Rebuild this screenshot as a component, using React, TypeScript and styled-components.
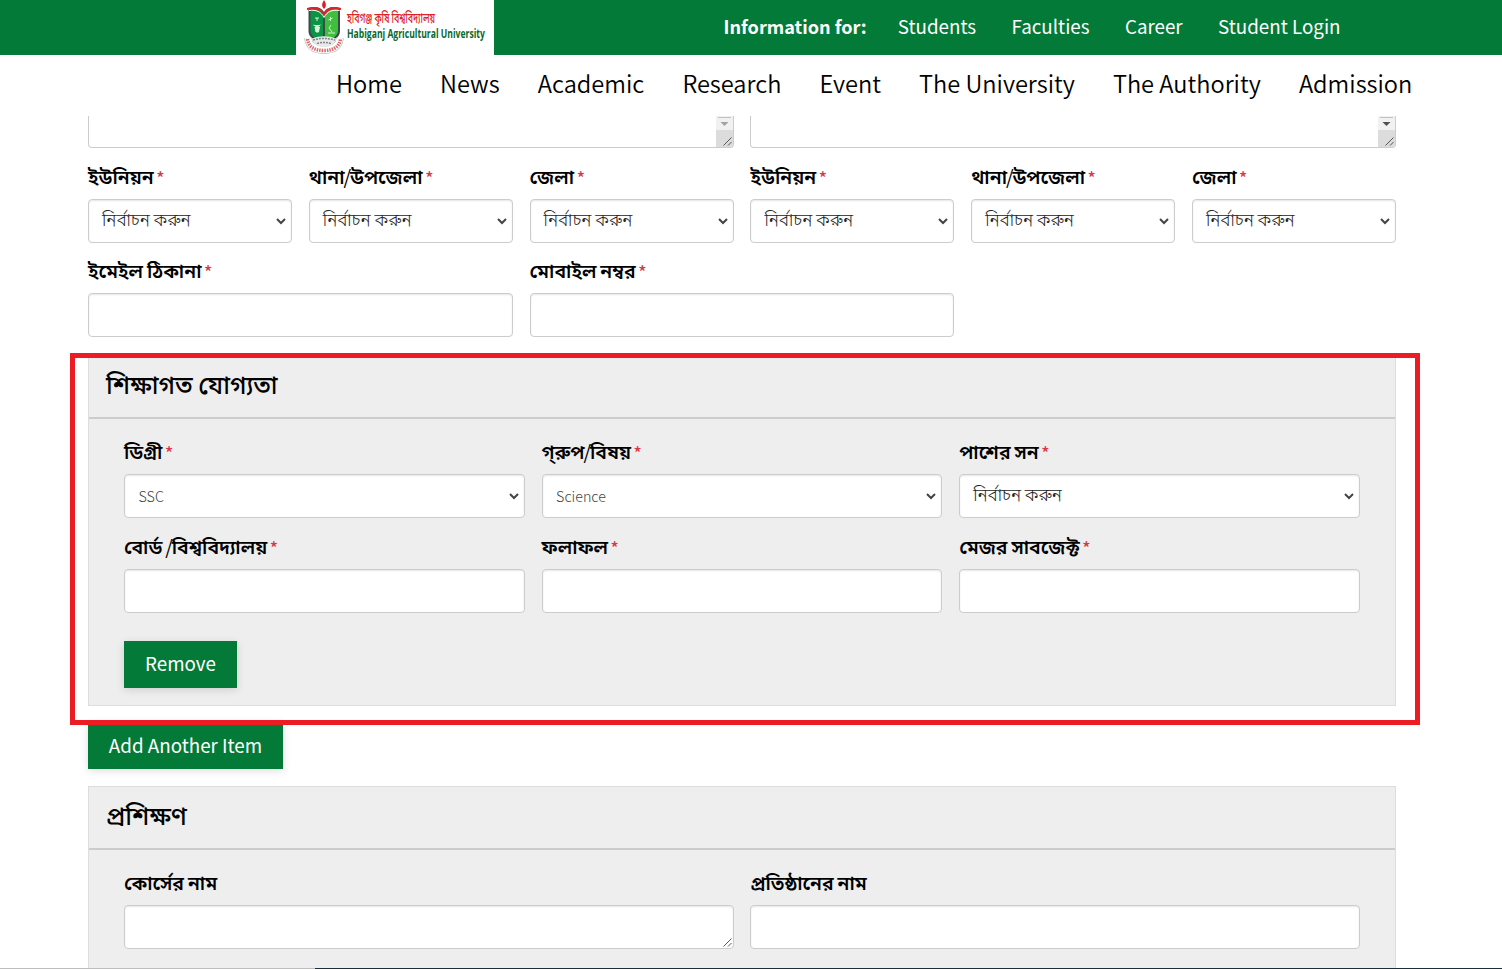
import React from "react";
import styled, { createGlobalStyle } from "styled-components";

const GREEN = "#047a38";

const GlobalStyle = createGlobalStyle`
  * { box-sizing: border-box; }
  html, body { margin: 0; padding: 0; }
  body {
    background: #fff;
    color: #000;
    font-family: "Noto Sans CJK JP", "Noto Sans Bengali", "Noto Sans", sans-serif;
    overflow: hidden;
  }
`;

const Page = styled.div`
  position: relative;
  width: 1502px;
  height: 969px;
  overflow: hidden;
  display: flex;
  flex-direction: column;
`;

const TopBar = styled.header`
  flex: none;
  height: 55px;
  background: ${GREEN};
  display: flex;
  padding-left: 296px;
`;

const LogoBox = styled.a`
  width: 198px;
  height: 55px;
  background: #fff;
  display: block;

  svg {
    display: block;
    overflow: visible;
  }
`;

const TopLinks = styled.nav`
  display: flex;
  margin-left: 229.5px;
  align-items: flex-start;
  color: #fff;
`;

const TopTitle = styled.span`
  font-size: 18.1px;
  font-weight: 700;
  line-height: 24px;
  width: 174.3px;
  margin-top: 14px;
  white-space: nowrap;
`;

const TopLink = styled.a`
  font-size: 18.8px;
  line-height: 24px;
  margin: 14px 35.4px 0 0;
  white-space: nowrap;
`;

const MainNav = styled.nav`
  flex: none;
  height: 61px;
  display: flex;
  gap: 38.1px;
  padding: 13px 0 0 336px;
`;

const NavLink = styled.a`
  font-size: 23.6px;
  line-height: 30px;
  font-weight: 350;
  white-space: nowrap;
`;

const Content = styled.main`
  flex: none;
  width: 1308px;
  margin-left: 88px;
  display: flex;
  flex-direction: column;
`;

const Row = styled.div<{ $cols: number }>`
  display: grid;
  grid-template-columns: repeat(${(p) => p.$cols}, 1fr);
  column-gap: 16.8px;
`;

const FieldBox = styled.div<{ $lead: number }>`
  display: flex;
  flex-direction: column;
  padding-top: ${(p) => p.$lead}px;
`;

const Label = styled.label`
  height: 37px;
  line-height: 28px;
  font-size: 19.4px;
  font-weight: 600;
  word-spacing: -0.5px;
  white-space: nowrap;
`;

const Slash = styled.span`
  font-weight: 400;
  margin: 0 -1.2px 0 -1px;
`;

const Star = styled.span`
  color: #dc3545;
  font-size: 17px;
  font-weight: 500;
  line-height: 1;
  vertical-align: -1px;
  margin-left: 2.5px;
`;

const Control = styled.div`
  height: 44px;
  border: 1px solid #ccc;
  border-radius: 4px;
  background: #fff;
  box-shadow: inset 0 1px 2px rgba(0, 0, 0, 0.1);
  color: #444;
  display: flex;
  justify-content: space-between;
  align-items: flex-start;
  padding: 0 5px 0 13px;
  position: relative;
`;

const Value = styled.span<{ $latin?: boolean }>`
  font-size: ${(p) => (p.$latin ? 14.3 : 17.3)}px;
  font-weight: 300;
  line-height: 24px;
  padding-top: ${(p) => (p.$latin ? 9 : 7)}px;
  padding-left: ${(p) => (p.$latin ? 0.5 : 0)}px;
  color: ${(p) => (p.$latin ? "#444" : "#222")};
  white-space: nowrap;
`;

const Chevron = styled.svg`
  margin-top: 17px;
  width: 10px;
  height: 8px;
`;

const Grip = styled.svg`
  position: absolute;
  right: 0;
  bottom: 0;
  width: 11px;
  height: 11px;
`;

const TextTail = styled.div`
  height: 32px;
  border: 1px solid #ccc;
  border-top: 0;
  border-radius: 0 0 4px 4px;
  overflow: hidden;
  display: flex;
  justify-content: flex-end;
`;

const ScrollTrack = styled.svg`
  width: 17px;
  height: 31px;
  flex: none;
`;

const Section = styled.section<{ $top: number }>`
  margin-top: ${(p) => p.$top}px;
  border: 1px solid #ddd;
  background: #eee;
`;

const SectionTitle = styled.h2`
  margin: 0;
  height: 63px;
  border-bottom: 2px solid #ccc;
  padding: 9.5px 0 0 17px;
  font-size: 25px;
  line-height: 34px;
  font-weight: 500;
`;

const SectionBody = styled.div<{ $bottom: number }>`
  padding: 0 35px ${(p) => p.$bottom}px;
`;

const Button = styled.button<{ $w: number; $top: number; $drop?: number }>`
  display: block;
  width: ${(p) => p.$w}px;
  height: 47px;
  margin-top: ${(p) => p.$top}px;
  padding: 0 0 ${(p) => 3 - (p.$drop ?? 0)}px;
  border: 0;
  background: ${GREEN};
  color: #fff;
  font-family: inherit;
  font-size: 18.8px;
  line-height: 44px;
  white-space: nowrap;
  box-shadow: 0 2px 8px rgba(0, 0, 0, 0.13);
`;

const Highlight = styled.div`
  position: absolute;
  left: 70px;
  top: 353px;
  width: 1350px;
  height: 372px;
  border: 5px solid #ed1c24;
`;

const BottomEdge = styled.div`
  position: absolute;
  left: 0;
  bottom: 0;
  width: 100%;
  height: 1px;
  background: linear-gradient(to right, #bdbdbd 315px, #16303c 315px);
`;

function Logo() {
  return (
    <svg width="198" height="55" viewBox="0 0 198 55">
      <path d="M12.500 8c7-2 12.500-1 15.500 4c3-5 9-6 16-4v23c0 7-7 10-16 12c-9-2-15.500-5-15.500-12z" fill="#3d4a4a" />
      <path d="M14.500 9.500c7-1 11 1 12.500 5.500v25c-8-1-12.500-4-12.500-10z" fill="#0b9444" />
      <path d="M42 9.500c-7-1-11.500 1-13 5.500v25c8-1 13-4 13-10z" fill="#3fbf3c" />
      <path d="M11 8c7-2 14-1 17 5c3-6 10-7 17-5v2c-8-2-13 0-17 6c-4-6-9-8-17-6z" fill="#d9252c" />
      <path d="M13 10.500c7-1 12 1 15 7c3-6 8-8 15.500-7" fill="none" stroke="#fff" strokeWidth="1" />
      <path d="M28 0c-2.500 4-2.500 6 0 9c2.500-3 2.500-5 0-9z" fill="#e01b22" />
      <path d="M17.500 25q3.500 3 7 0M19 27h4.500l-1 5h-2.500z M21 18v3M19 18h4" fill="#d8f3dc" stroke="#d8f3dc" strokeWidth="1" />
      <path d="M32.500 20l4-2M34.500 17v4M35 25l-2 3l3 4M32 33h7" fill="none" stroke="#d8f3dc" strokeWidth="1" />
      <path d="M12 38c1 8 6 12 16 12s15-4 16-12" fill="none" stroke="#a5a9ac" strokeWidth="7.500" />
      <path d="M12 38c1 8 6 12 16 12s15-4 16-12" fill="none" stroke="#fff" strokeWidth="6.500" />
      <path d="M11.500 39c1 8 7 11.500 16.500 11.500s15.500-3.500 16.500-11.500" fill="none" stroke="#dd6a6e" strokeWidth="3.500" strokeDasharray="1.500 1" />
      <path d="M16 38.500c8-3 16-3 24 0c-1 6-6 8.500-12 8.500s-11-2.500-12-8.500z" fill="#e8eaea" />
      <path d="M17 40q11-3 22 0M21 43.500q7-2 14 0" fill="none" stroke="#7d848a" strokeWidth="1.500" strokeDasharray="2 1" />
      <text x="51" y="22.500" fontSize="14.500" fontWeight="500" fill="#dd1f26" textLength="88" lengthAdjust="spacingAndGlyphs">হবিগঞ্জ কৃষি বিশ্ববিদ্যালয়</text>
      <text x="51" y="38" fontSize="12" fontFamily="Open Sans" fontWeight="700" fill="#0a6a2e" textLength="138" lengthAdjust="spacingAndGlyphs">Habiganj Agricultural University</text>
    </svg>
  );
}

function ResizeGrip() {
  return (
    <Grip viewBox="0 0 11 11">
      <path d="M1.500 9.500l8-8M6 9.500l3.500-3.500" stroke="#555" strokeWidth="1" fill="none" />
    </Grip>
  );
}

type FieldProps = { label: string; value?: string; latin?: boolean; required?: boolean; lead?: number; grip?: boolean };

function Field({ label, value, latin, required = true, lead = 14, grip }: FieldProps) {
  const [head, tail] = label.split("/");
  return (
    <FieldBox $lead={lead}>
      <Label>
        {head}
        {tail && <Slash>/</Slash>}
        {tail}
        {required && <Star>*</Star>}
      </Label>
      <Control>
        {value && <Value $latin={latin}>{value}</Value>}
        {value && (
          <Chevron viewBox="0 0 10 8">
            <path d="M1 2l4 4l4-4" fill="none" stroke="#444" strokeWidth="2" />
          </Chevron>
        )}
        {grip && <ResizeGrip />}
      </Control>
    </FieldBox>
  );
}

function ScrolledTextarea({ arrow }: { arrow: string }) {
  return (
    <TextTail>
      <ScrollTrack viewBox="0 0 17 31">
        <rect width="17" height="14" fill="#f1f1f1" />
        <rect x="2" y="1" width="13" height="1" fill="#c1c1c1" />
        <path d="M4.500 6h8l-4 4z" fill={arrow} />
        <rect y="14" width="17" height="17" fill="#dcdcdc" />
        <path d="M7.500 29.500l8-8M12 29.500l3.500-3.500" stroke="#555" fill="none" />
      </ScrollTrack>
    </TextTail>
  );
}

const CHOOSE = "নির্বাচন করুন";
const AREAS = ["ইউনিয়ন", "থানা/উপজেলা", "জেলা", "ইউনিয়ন", "থানা/উপজেলা", "জেলা"];
const MENU = ["Home", "News", "Academic", "Research", "Event", "The University", "The Authority", "Admission"];

export default function App() {
  return (
    <Page>
      <GlobalStyle />
      <TopBar>
        <LogoBox>
          <Logo />
        </LogoBox>
        <TopLinks>
          <TopTitle>Information for:</TopTitle>
          {["Students", "Faculties", "Career", "Student Login"].map((t) => (
            <TopLink key={t}>{t}</TopLink>
          ))}
        </TopLinks>
      </TopBar>
      <MainNav>
        {MENU.map((t) => (
          <NavLink key={t}>{t}</NavLink>
        ))}
      </MainNav>
      <Content>
        <Row $cols={2}>
          <ScrolledTextarea arrow="#a3a3a3" />
          <ScrolledTextarea arrow="#505050" />
        </Row>
        <Row $cols={6}>
          {AREAS.map((a, i) => (
            <Field key={i} label={a} value={CHOOSE} />
          ))}
        </Row>
        <Row $cols={3}>
          <Field label="ইমেইল ঠিকানা" lead={13} />
          <Field label="মোবাইল নম্বর" lead={13} />
        </Row>
        <Section $top={18}>
          <SectionTitle>শিক্ষাগত যোগ্যতা</SectionTitle>
          <SectionBody $bottom={17}>
            <Row $cols={3}>
              <Field label="ডিগ্রী" value="SSC" latin lead={18} />
              <Field label="গ্‌রুপ/বিষয়" value="Science" latin lead={18} />
              <Field label="পাশের সন" value={CHOOSE} lead={18} />
            </Row>
            <Row $cols={3}>
              <Field label="বোর্ড /বিশ্ববিদ্যালয়" />
              <Field label="ফলাফল" />
              <Field label="মেজর সাবজেক্ট" />
            </Row>
            <Button $w={113} $top={28}>Remove</Button>
          </SectionBody>
        </Section>
        <Button $w={195} $top={16} $drop={2}>Add Another Item</Button>
        <Section $top={17}>
          <SectionTitle>প্রশিক্ষণ</SectionTitle>
          <SectionBody $bottom={60}>
            <Row $cols={2}>
              <Field label="কোর্সের নাম" required={false} lead={18} grip />
              <Field label="প্রতিষ্ঠানের নাম" required={false} lead={18} />
            </Row>
          </SectionBody>
        </Section>
      </Content>
      <Highlight />
      <BottomEdge />
    </Page>
  );
}
